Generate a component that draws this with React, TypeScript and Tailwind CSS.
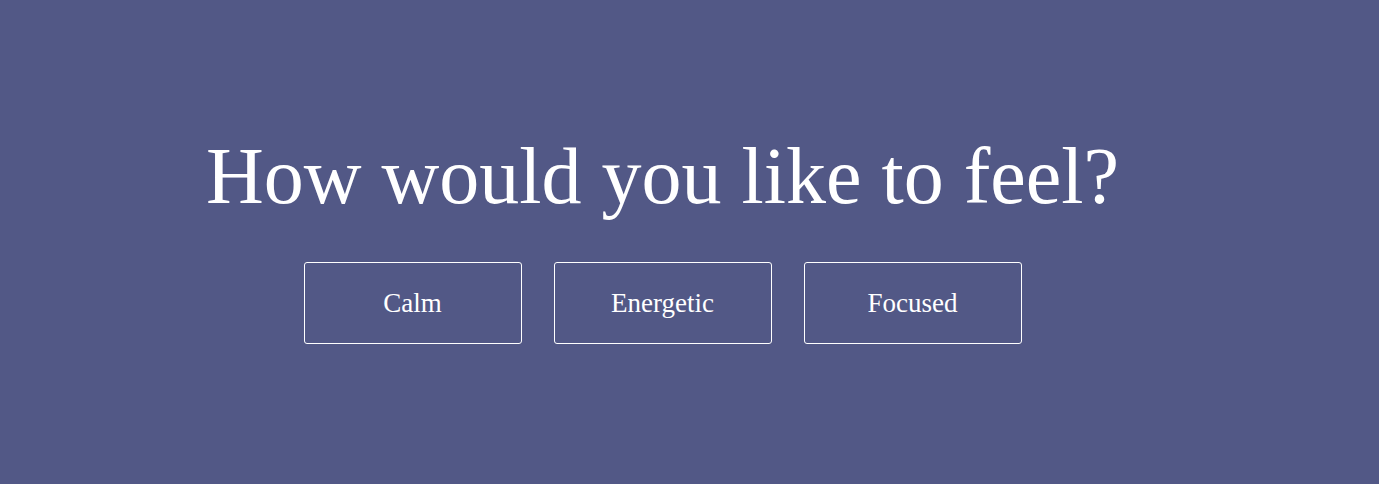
export default function App() {
  const moods = ["Calm", "Energetic", "Focused"];

  return (
    <main
      className="min-h-[484px] w-full bg-[#525886] flex flex-col items-center justify-center pr-[54px] pb-1 text-white"
      style={{ fontFamily: '"Liberation Serif", "Times New Roman", serif' }}
    >
      {/* Prompt */}
      <h1 className="text-[80px] leading-none font-normal mb-[46px]">
        How would you like to feel?
      </h1>

      {/* Options */}
      <div className="flex gap-8">
        {moods.map((mood) => (
          <button
            key={mood}
            className="w-[218px] h-[82px] border border-white rounded-[3px] text-[27px] text-white bg-transparent cursor-pointer"
          >
            {mood}
          </button>
        ))}
      </div>
    </main>
  );
}
